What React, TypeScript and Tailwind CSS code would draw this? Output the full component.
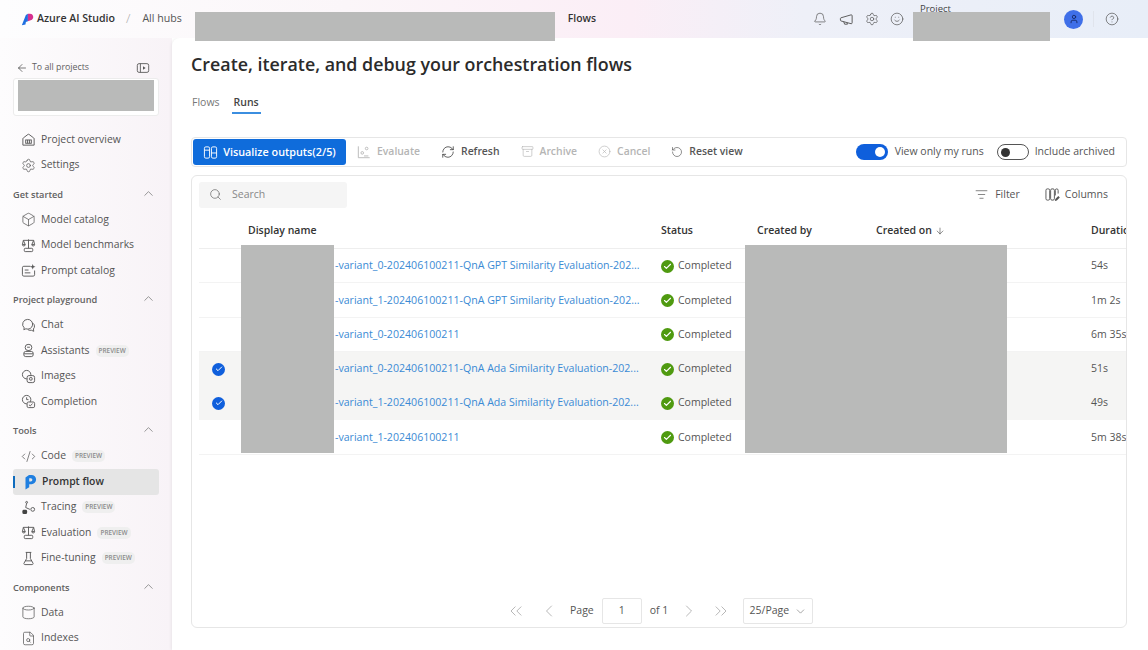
import type { ReactNode } from "react";
import {
  Archive,
  ArrowDown,
  ArrowLeft,
  Bell,
  Box,
  Check,
  ChevronDown,
  ChevronLeft,
  ChevronRight,
  ChevronUp,
  ChevronsLeft,
  ChevronsRight,
  CircleHelp,
  CircleX,
  CodeXml,
  Cylinder,
  FileSearch,
  ListFilter,
  RefreshCw,
  RotateCcw,
  Search,
  Settings,
  Smile,
  User,
} from "lucide-react";

type NavItem = { label: string; icon: ReactNode; preview?: boolean; active?: boolean };

const ic = "size-[15px] text-[#5a5a5a] shrink-0";

function Glyph({ children, className = ic }: { children: ReactNode; className?: string }) {
  return (
    <svg viewBox="0 0 16 16" fill="none" stroke="currentColor" strokeWidth={1} className={className}>
      {children}
    </svg>
  );
}

const HomeIcon = () => (
  <Glyph>
    <path d="M2 14V7.2a1 1 0 0 1 .4-.8l5-3.8a1 1 0 0 1 1.2 0l5 3.8a1 1 0 0 1 .4.8V14z" />
    <rect x="5" y="8.5" width="6" height="3.5" />
    <path d="M7 8.5V12M9 8.5V12" />
  </Glyph>
);

const ScaleIcon = () => (
  <Glyph>
    <path d="M2.5 2.5h11M8 1.5v9.5M2.5 2.5 1.5 7h3zM13.5 2.5 11.5 7h3z" />
    <path d="M1.5 7a1.5 1.5 0 0 0 3 0M11.5 7a1.5 1.5 0 0 0 3 0" />
    <rect x="3.5" y="11" width="9" height="3.5" rx="1" />
  </Glyph>
);

const PromptCatalogIcon = () => (
  <Glyph>
    <path d="M10 3.5H3a1.5 1.5 0 0 0-1.5 1.5v7.5A1.5 1.5 0 0 0 3 14h10a1.5 1.5 0 0 0 1.5-1.5V8" />
    <path d="M4 7.5h4M4 10.5h6" />
    <path d="M12.5 1l.8 2.2 2.2.8-2.2.8-.8 2.2-.8-2.2-2.2-.8 2.2-.8z" fill="currentColor" stroke="none" />
  </Glyph>
);

const ChatIcon = () => (
  <Glyph>
    <path d="M7 1.5a5.2 5.2 0 0 0-3.6 9L3 12.5l2.2-1A5.2 5.2 0 1 0 7 1.5z" />
    <path d="M12.6 5.5a4 4 0 0 1 .6 6.2l.4 2.5-2.6-1.2a4 4 0 0 1-3.4-.4" />
  </Glyph>
);

const AssistantIcon = () => (
  <Glyph>
    <rect x="4.5" y="1.5" width="7" height="6.5" rx="3" />
    <path d="M6.5 4.5h3" />
    <rect x="3" y="9" width="10" height="5.5" rx="2" />
    <path d="M3 11.5h10" />
  </Glyph>
);

const ImagesIcon = () => (
  <Glyph>
    <circle cx="6" cy="6" r="4.5" />
    <rect x="6.5" y="7" width="8" height="7.5" rx="2" fill="#f9f6f8" />
    <circle cx="10.5" cy="10.5" r="1.5" />
  </Glyph>
);

const CompletionIcon = () => (
  <Glyph>
    <circle cx="6" cy="6" r="4.5" />
    <path d="M6 3.5V6h2" />
    <rect x="6.5" y="8.5" width="8" height="6" rx="1.5" fill="#f9f6f8" />
    <path d="m8.5 11.5 1.3 1.2 2.5-2.4" />
  </Glyph>
);

const TracingIcon = () => (
  <Glyph>
    <circle cx="12.5" cy="10" r="2" />
    <circle cx="6" cy="2.5" r="1" />
    <path d="M6 3.5 5 8l4.5 2" />
    <rect x="1.5" y="10.5" width="5" height="4.5" rx="1.5" fill="#444" stroke="none" />
  </Glyph>
);

const BeakerIcon = () => (
  <Glyph>
    <path d="M5 1.5h6M6 1.5v6.5L3.2 13a1 1 0 0 0 .9 1.5h7.8a1 1 0 0 0 .9-1.5L10 8V1.5M4.5 10.5h7" />
  </Glyph>
);

function PromptFlowIcon() {
  return (
    <svg viewBox="0 0 16 16" className="size-[16px] shrink-0">
      <path d="M4.5 3.5 8 1h2.5a4.6 4.6 0 0 1 0 9.2H8.2v3L4.5 15.5z" fill="#1f7fe0" />
      <path d="M8.2 4.2h1.6a1.6 1.6 0 0 1 0 3.2H8.2z" fill="#e5e5e5" />
    </svg>
  );
}

function Logo() {
  return (
    <svg viewBox="0 0 16 16" className="size-[13px]">
      <path d="M1 15 6 2.5 8.5 1v9L6 11l-.5 3z" fill="#1f6fe0" />
      <path d="M8.5 1h2.7a4 4 0 0 1 2.3 7.2L8.5 10z" fill="#d6308f" />
    </svg>
  );
}

const sections: { title: string | null; items: NavItem[] }[] = [
  {
    title: null,
    items: [
      { label: "Project overview", icon: <HomeIcon /> },
      { label: "Settings", icon: <Settings className={ic} strokeWidth={1.2} /> },
    ],
  },
  {
    title: "Get started",
    items: [
      { label: "Model catalog", icon: <Box className={ic} strokeWidth={1.2} /> },
      { label: "Model benchmarks", icon: <ScaleIcon /> },
      { label: "Prompt catalog", icon: <PromptCatalogIcon /> },
    ],
  },
  {
    title: "Project playground",
    items: [
      { label: "Chat", icon: <ChatIcon /> },
      { label: "Assistants", icon: <AssistantIcon />, preview: true },
      { label: "Images", icon: <ImagesIcon /> },
      { label: "Completion", icon: <CompletionIcon /> },
    ],
  },
  {
    title: "Tools",
    items: [
      { label: "Code", icon: <CodeXml className={ic} strokeWidth={1.2} />, preview: true },
      { label: "Prompt flow", icon: <PromptFlowIcon />, active: true },
      { label: "Tracing", icon: <TracingIcon />, preview: true },
      { label: "Evaluation", icon: <ScaleIcon />, preview: true },
      { label: "Fine-tuning", icon: <BeakerIcon />, preview: true },
    ],
  },
  {
    title: "Components",
    items: [
      { label: "Data", icon: <Cylinder className={ic} strokeWidth={1.2} /> },
      { label: "Indexes", icon: <FileSearch className={ic} strokeWidth={1.2} /> },
    ],
  },
];

const runs = [
  { name: "-variant_0-202406100211-QnA GPT Similarity Evaluation-202...", duration: "54s" },
  { name: "-variant_1-202406100211-QnA GPT Similarity Evaluation-202...", duration: "1m 2s" },
  { name: "-variant_0-202406100211", duration: "6m 35s" },
  { name: "-variant_0-202406100211-QnA Ada Similarity Evaluation-202...", duration: "51s", selected: true },
  { name: "-variant_1-202406100211-QnA Ada Similarity Evaluation-202...", duration: "49s", selected: true },
  { name: "-variant_1-202406100211", duration: "5m 38s" },
];

function Sidebar() {
  return (
    <aside className="w-[172px] shrink-0 h-full bg-gradient-to-r from-[#fdfcfd] to-[#f8f3f7] overflow-hidden px-[13px] pt-[21px]">
      <div className="flex items-center justify-between h-[18px] pl-[3px] pr-[9px] text-[#616161]">
        <div className="flex items-center gap-[4px]">
          <ArrowLeft className="size-[12px] text-[#444]" strokeWidth={1.4} />
          <span className="text-[8.8px]">To all projects</span>
        </div>
        <Glyph className="size-[14px] text-[#555]">
          <rect x="1.5" y="3" width="13" height="10" rx="2" />
          <path d="M5 3v10" />
          <path d="m8 6 3 2-3 2z" fill="currentColor" stroke="none" />
        </Glyph>
      </div>
      <div className="mt-[1px] h-[38px] w-[146px] bg-white rounded-[3px] border border-[#ececec] px-[4px] pt-[1px]">
        <div className="h-[31px] bg-[#b9bab9]" />
      </div>
      <div className="mt-[11px]">
        {sections.map((s, i) => (
          <div key={i}>
            {s.title && (
              <div className="flex items-center justify-between h-[25px] mt-[4px] pr-[3px] text-[9.2px] font-semibold text-[#616161]">
                <span>{s.title}</span>
                <ChevronUp className="size-[15px] -mt-[3px] text-[#777]" strokeWidth={1.2} />
              </div>
            )}
            {s.items.map((it) => (
              <div
                key={it.label}
                className={`relative flex items-center gap-[5px] h-[25.5px] pl-[8px] rounded-[3px] text-[10.4px] ${
                  it.active ? "bg-[#e5e5e5] text-[#333] font-semibold" : "text-[#555]"
                }`}
              >
                {it.active && <span className="absolute left-0 top-[7px] h-[12px] w-[2px] bg-[#0f6cbd]" />}
                {it.icon}
                <span>{it.label}</span>
                {it.preview && (
                  <span className="ml-[1px] rounded-[5px] bg-[#efefef] px-[3px] text-[6.4px] leading-[12px] font-semibold text-[#8a8a8a]">
                    PREVIEW
                  </span>
                )}
              </div>
            ))}
          </div>
        ))}
      </div>
    </aside>
  );
}

function TopBar() {
  return (
    <header className="relative h-[38px] shrink-0 flex items-center bg-[linear-gradient(90deg,#fdfdfe_0%,#fbf6f9_30%,#fbeef6_55%,#eef0f8_70%,#e8eef8_100%)] pl-[21px] pr-[29px] text-[#424242]">
      <Logo />
      <span className="ml-[3px] text-[10.6px] font-semibold text-[#333]">Azure AI Studio</span>
      <span className="ml-[11px] text-[13px] font-light text-[#aaa]">/</span>
      <span className="ml-[12px] text-[10.6px] text-[#555]">All hubs</span>
      <span className="ml-[386px] text-[10.4px] font-semibold text-[#333]">Flows</span>
      <div className="ml-auto self-stretch flex items-center">
        <Bell className="size-[14px] text-[#555]" strokeWidth={1.2} />
        <Glyph className="size-[15px] ml-[12px] text-[#555]">
          <path d="M2 6.2 13 3a1 1 0 0 1 1 1v7.5a1 1 0 0 1-1 1L2 9.5a1 1 0 0 1-.5-.9V7a1 1 0 0 1 .5-.8z" />
          <path d="M5 10.3 6 13h3l-.4-1.5" />
        </Glyph>
        <Settings className="size-[14px] ml-[11px] text-[#555]" strokeWidth={1.2} />
        <Smile className="size-[14px] ml-[11px] text-[#555]" strokeWidth={1.2} />
        <span className="ml-[16px] w-[144px] self-start pt-[4px] text-[9.5px] leading-[10px] text-[#444]">Project</span>
        <span className="flex items-center justify-center size-[19px] rounded-full bg-[#3f6fe8]">
          <User className="size-[10px] text-[#14245c]" strokeWidth={2} />
        </span>
        <span className="ml-[10px] h-[16px] w-px bg-[#e0e4ec]" />
        <CircleHelp className="size-[14px] ml-[11px] text-[#555]" strokeWidth={1.2} />
      </div>
      <div className="absolute left-[195px] top-[12px] h-[29px] w-[360px] bg-[#b9bab9]" />
      <div className="absolute left-[913px] top-[12px] h-[29px] w-[137px] bg-[#b9bab9]" />
    </header>
  );
}

function ToolButton({ icon, label, off }: { icon: ReactNode; label: string; off?: boolean }) {
  return (
    <div className={`flex items-center gap-[6px] text-[10.4px] font-semibold ${off ? "text-[#b5b5b5]" : "text-[#555]"}`}>
      {icon}
      <span>{label}</span>
    </div>
  );
}

function Toolbar() {
  return (
    <div className="flex items-center h-[30px] w-[936px] rounded-[4px] border border-[#e6e6e6] pl-[1px] pr-[11px]">
      <button className="flex items-center gap-[5px] h-[26px] w-[153px] justify-center rounded-[3px] bg-[#0f6cdb] text-[10.8px] font-semibold text-white">
        <Glyph className="size-[15px]">
          <rect x="1.5" y="2" width="5.5" height="12" rx="1.5" />
          <path d="M1.5 5.5H7" />
          <rect x="9" y="2" width="5.5" height="12" rx="1.5" />
          <path d="M9 8.5h5.5" />
        </Glyph>
        Visualize outputs(2/5)
      </button>
      <div className="flex items-center gap-[21px] ml-[11px]">
        <ToolButton
          off
          label="Evaluate"
          icon={
            <Glyph className="size-[14px]">
              <path d="M1.5 1.5v13h13" />
              <circle cx="6" cy="9" r="1.5" />
              <circle cx="11" cy="4" r="1.5" />
              <path d="M8 12.5h5" />
            </Glyph>
          }
        />
        <ToolButton label="Refresh" icon={<RefreshCw className="size-[14px] text-[#333]" strokeWidth={1.3} />} />
        <ToolButton off label="Archive" icon={<Archive className="size-[13px]" strokeWidth={1.2} />} />
        <ToolButton off label="Cancel" icon={<CircleX className="size-[13px]" strokeWidth={1.2} />} />
        <ToolButton label="Reset view" icon={<RotateCcw className="size-[12px]" strokeWidth={1.3} />} />
      </div>
      <div className="ml-auto flex items-center text-[10.5px] text-[#555]">
        <span className="flex items-center justify-end h-[16px] w-[32px] rounded-full bg-[#0f5fdc] pr-[3px]">
          <span className="size-[10px] rounded-full bg-white" />
        </span>
        <span className="ml-[7px]">View only my runs</span>
        <span className="ml-[13px] flex items-center h-[16px] w-[32px] rounded-full border border-[#555] pl-[3px]">
          <span className="size-[9px] rounded-full bg-[#333]" />
        </span>
        <span className="ml-[6px]">Include archived</span>
      </div>
    </div>
  );
}

function RunsTable() {
  const cols = "grid grid-cols-[49px_413px_96px_119px_215px_1fr] items-center";
  return (
    <div className="relative flex flex-col mt-[8px] w-[936px] h-[453px] rounded-[6px] border border-[#e6e6e6] overflow-hidden">
      <div className="flex items-center justify-between h-[37px] pl-[7px] pr-[18px] shrink-0">
        <div className="flex items-center gap-[10px] w-[148px] h-[26px] rounded-[3px] bg-[#f5f5f5] pl-[10px] text-[10.5px] text-[#888]">
          <Search className="size-[13px] text-[#666]" strokeWidth={1.3} />
          Search
        </div>
        <div className="flex items-center text-[10.5px] text-[#555] font-medium">
          <ListFilter className="size-[13px] mr-[7px]" strokeWidth={1.3} />
          Filter
          <Glyph className="size-[15px] ml-[25px] mr-[5px]">
            <rect x="1" y="2" width="4" height="12" rx="1.5" />
            <rect x="6" y="2" width="4" height="12" rx="1.5" />
            <path d="M11 9V3.5A1.5 1.5 0 0 1 12.5 2 1.5 1.5 0 0 1 14 3.5V7" />
            <path d="m10.5 15 .5-2.2 3.2-3.3 1.6 1.6-3.2 3.4z" fill="currentColor" stroke="none" />
          </Glyph>
          Columns
        </div>
      </div>
      <div className={`${cols} h-[36px] ml-[7px] border-b border-[#eeeeee] shrink-0 text-[10.5px] font-semibold text-[#333] whitespace-nowrap`}>
        <span />
        <span>Display name</span>
        <span>Status</span>
        <span>Created by</span>
        <span className="flex items-center gap-[3px]">
          Created on <ArrowDown className="size-[10px]" strokeWidth={1.3} />
        </span>
        <span>Duration</span>
      </div>
      {runs.map((r, i) => (
        <div
          key={i}
          className={`${cols} h-[34.3px] pt-[1px] ml-[7px] shrink-0 text-[10.5px] whitespace-nowrap border-b ${
            r.selected ? "bg-[#f5f5f4] border-[#f5f5f4]" : "border-[#f3f3f3]"
          }`}
        >
          <span className="flex justify-center pr-[10px]">
            {r.selected && (
              <span className="flex items-center justify-center size-[13px] rounded-full bg-[#0f5fdc]">
                <Check className="size-[8px] text-white" strokeWidth={3} />
              </span>
            )}
          </span>
          <a className="pl-[87px] text-[10.6px] text-[#3a8ad4]">{r.name}</a>
          <span className="flex items-center gap-[4px] text-[#555]">
            <span className="flex items-center justify-center size-[13px] rounded-full bg-[#4f9a10]">
              <Check className="size-[9px] text-white" strokeWidth={3} />
            </span>
            Completed
          </span>
          <span />
          <span />
          <span className="text-[#555]">{r.duration}</span>
        </div>
      ))}
      <div className="mt-auto mb-[3px] h-[26px] flex items-center pl-[314px] text-[10.5px] text-[#555]">
        <ChevronsLeft className="size-[20px] text-[#aaa]" strokeWidth={1} />
        <ChevronLeft className="size-[20px] ml-[13px] text-[#aaa]" strokeWidth={1} />
        <span className="ml-[11px]">Page</span>
        <span className="ml-[8px] flex items-center justify-center w-[40px] h-[26px] rounded-[2px] border border-[#e6e6e6]">1</span>
        <span className="ml-[8px]">of 1</span>
        <ChevronRight className="size-[20px] ml-[11px] text-[#aaa]" strokeWidth={1} />
        <ChevronsRight className="size-[20px] ml-[12px] text-[#aaa]" strokeWidth={1} />
        <span className="ml-[12px] flex items-center justify-center gap-[5px] w-[70px] h-[26px] rounded-[2px] border border-[#e6e6e6]">
          25/Page <ChevronDown className="size-[13px] text-[#777]" strokeWidth={1.2} />
        </span>
      </div>
      <div className="absolute left-[49px] top-[69px] h-[208px] w-[93px] bg-[#b9bab9]" />
      <div className="absolute left-[553px] top-[69px] h-[208px] w-[262px] bg-[#b9bab9]" />
    </div>
  );
}

export default function App() {
  return (
    <div className="w-[1148px] h-[650px] overflow-hidden flex flex-col bg-white font-['Open_Sans','Noto_Sans',sans-serif]">
      <TopBar />
      <div className="flex flex-1 min-h-0">
        <Sidebar />
        <main className="flex-1 min-w-0 rounded-tl-[8px] bg-white shadow-[-1px_0_3px_rgba(0,0,0,0.06)] pl-[19px] pt-[13px]">
          <h1 className="text-[17.85px] leading-[26px] font-semibold text-[#2b2b2b]">
            Create, iterate, and debug your orchestration flows
          </h1>
          <div className="flex gap-[12px] mt-[15px] pl-[1px] text-[10.5px] leading-[20px]">
            <span className="text-[#777] h-[22px]">Flows</span>
            <span className="font-semibold text-[#444] h-[22px] px-[2px] border-b-2 border-[#3b8ee0]">Runs</span>
          </div>
          <div className="mt-[23px]">
            <Toolbar />
            <RunsTable />
          </div>
        </main>
      </div>
    </div>
  );
}
